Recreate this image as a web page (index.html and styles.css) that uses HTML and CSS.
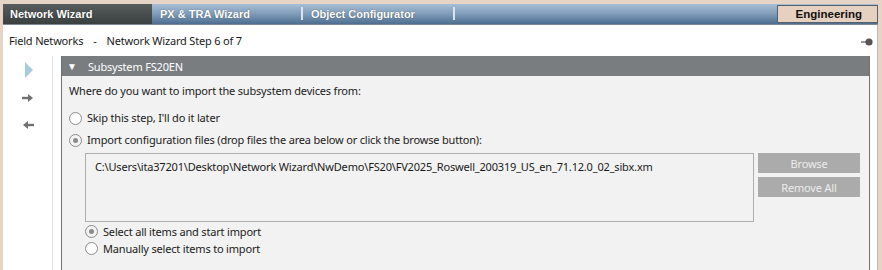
FILE: index.html
```html
<!DOCTYPE html>
<html>
<head>
<meta charset="utf-8">
<link rel="stylesheet" href="styles.css">
</head>
<body>
<div class="frame">
  <div class="tabbar">
    <div class="tab active">Network Wizard</div>
    <div class="tab">PX &amp; TRA Wizard</div>
    <div class="sep"></div>
    <div class="tab">Object Configurator</div>
    <div class="sep"></div>
    <div class="spacer"></div>
    <div class="mode">Engineering</div>
  </div>
  <div class="content">
    <div class="crumbs">
      <span class="crumb">Field Networks</span>
      <span class="dash">-</span>
      <span class="crumb">Network Wizard Step 6 of 7</span>
      <span class="spacer"></span>
      <svg class="pin" width="12" height="10" viewBox="0 0 12 10"><line x1="0" y1="5" x2="5" y2="5" stroke="#555" stroke-width="1.2"/><circle cx="8" cy="5" r="3.6" fill="#555"/></svg>
    </div>
    <div class="main">
      <div class="nav">
        <svg class="play" width="10" height="16" viewBox="0 0 10 16"><polygon points="1,0 9,8 1,16" fill="#a9c9dd"/></svg>
        <svg class="arrow" width="12" height="10" viewBox="0 0 12 10"><path d="M0 5 H8" stroke="#707070" stroke-width="2.4"/><polygon points="6,1 11,5 6,9" fill="#707070"/></svg>
        <svg class="arrow" width="12" height="10" viewBox="0 0 12 10"><path d="M4 5 H12" stroke="#707070" stroke-width="2.4"/><polygon points="6,1 1,5 6,9" fill="#707070"/></svg>
      </div>
      <div class="panel">
        <div class="panel-head"><span class="caret">▼</span>Subsystem FS20EN</div>
        <div class="panel-body">
          <div class="question">Where do you want to import the subsystem devices from:</div>
          <label class="radio r-skip"><span class="dot"></span>Skip this step, I'll do it later</label>
          <label class="radio checked r-import"><span class="dot"></span>Import configuration files (drop files the area below or click the browse button):</label>
          <div class="files">
            <div class="dropbox">C:\Users\ita37201\Desktop\Network Wizard\NwDemo\FS20\FV2025_Roswell_200319_US_en_71.12.0_02_sibx.xm</div>
            <div class="buttons">
              <div class="btn">Browse</div>
              <div class="btn">Remove All</div>
            </div>
          </div>
          <div class="sub">
            <label class="radio checked"><span class="dot"></span>Select all items and start import</label>
            <label class="radio"><span class="dot"></span>Manually select items to import</label>
          </div>
        </div>
      </div>
      <div class="gutter"></div>
    </div>
  </div>
</div>
</body>
</html>
```
FILE: styles.css
```css
* { box-sizing: border-box; }
html, body { margin: 0; padding: 0; }
body {
  background: #e6d4c6;
  width: 882px;
  height: 270px;
  overflow: hidden;
  font-family: "Noto Sans", "Open Sans", sans-serif;
  font-size: 11px;
  letter-spacing: -0.18px;
  color: #1a1a1a;
}
.frame {
  margin: 4px 4px 0 3px;
  height: 266px;
  display: flex;
  flex-direction: column;
}
.tabbar {
  height: 21px;
  display: flex;
  align-items: stretch;
  background: linear-gradient(#a7bfd5, #7f9bb8 50%, #4d6d90);
  border-bottom: 1px solid #7d8a96;
  font-family: "Liberation Sans", Arial, sans-serif;
  font-weight: bold;
  font-size: 11px;
  letter-spacing: 0;
  color: #fff;
}
.tab {
  display: flex;
  align-items: center;
  padding: 0 0 0 8px;
  text-shadow: 0 0 1px rgba(0,0,0,0.5);
}
.tab.active {
  width: 149px;
  padding-left: 7px;
  background: linear-gradient(#575c5c, #3a3f3f);
}
.tab:nth-child(2) { width: 149px; }
.tab:nth-child(4) { width: 150px; }
.sep {
  width: 2px;
  margin: 3px 0 4px 0;
  background: #d8e4ee;
}
.spacer { flex: 1; }
.mode {
  width: 101px;
  margin: 1px 0 1px 0;
  background: #e6d0c0;
  border: 1px solid #56606a;
  color: #111;
  text-shadow: none;
  display: flex;
  align-items: center;
  justify-content: flex-end;
  padding-right: 15px;
  font-size: 11.5px;
}
.content {
  flex: 1;
  background: #fff;
  border-right: 1px solid #b9b9b9;
  display: flex;
  flex-direction: column;
}
.crumbs {
  height: 31px;
  display: flex;
  align-items: center;
  padding: 0 4px 0 6px;
}
.dash { margin: 0 10px 0 10px; }
.pin { margin-right: 0; margin-top: 2px; }
.main {
  flex: 1;
  display: flex;
}
.nav {
  width: 50px;
  border-right: 1px solid #e3e3e3;
  display: flex;
  flex-direction: column;
  align-items: center;
  padding-top: 6px;
  margin-right: 8px;
}
.nav .play { margin-left: 2px; }
.nav .arrow { margin-top: 15px; }
.nav .arrow + .arrow { margin-top: 17px; }
.panel {
  width: 809px;
  display: flex;
  flex-direction: column;
  border: 1px solid #6f7274;
  border-top: none;
  border-bottom: none;
  background: #f2f2f2;
}
.panel-head {
  height: 20px;
  background: #797d80;
  color: #fff;
  display: flex;
  align-items: center;
  padding-left: 5px;
}
.caret { font-size: 10px; margin-right: 11px; letter-spacing: 0; }
.panel-body {
  padding: 6px 8px 0 7px;
}
.question { height: 18px; line-height: 18px; }
.radio {
  display: flex;
  align-items: center;
  height: 18px;
  line-height: 18px;
}
.r-skip { margin-top: 9px; }
.r-import { margin-top: 4px; }
.dot {
  width: 13px;
  height: 13px;
  border: 1px solid #8b8b8b;
  border-radius: 50%;
  background: #fff;
  margin-right: 5px;
  flex: none;
  position: relative;
}
.radio.checked .dot {
  background: #f3f3f3;
}
.radio.checked .dot::after {
  content: "";
  position: absolute;
  left: 3px; top: 3px;
  width: 5px; height: 5px;
  border-radius: 50%;
  background: #8a8a8a;
}
.files {
  display: flex;
  margin-top: 4px;
  margin-left: 16px;
  gap: 4px;
}
.dropbox {
  width: 669px;
  height: 69px;
  border: 1px solid #aeaeae;
  padding: 4px 9px;
  line-height: 18px;
}
.buttons {
  display: flex;
  flex-direction: column;
  gap: 4px;
}
.btn {
  width: 102px;
  height: 20px;
  background: #ababab;
  color: #ececec;
  display: flex;
  align-items: center;
  justify-content: center;
}
.sub {
  margin-left: 16px;
  margin-top: 1px;
}
.sub .radio { height: 17px; line-height: 17px; }
.gutter { flex: 1; }
```
